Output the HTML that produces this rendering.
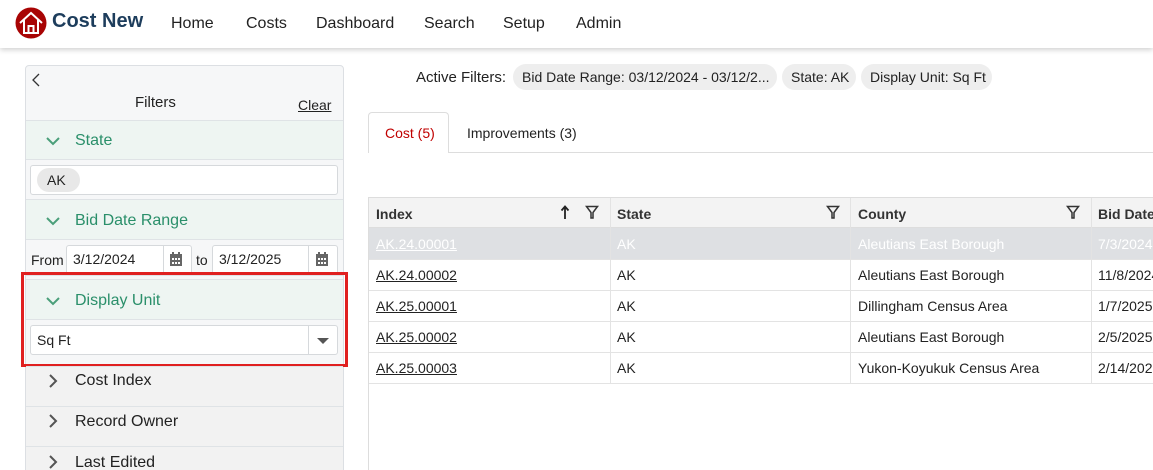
<!DOCTYPE html>
<html style="width:1153px;height:470px;overflow:hidden"><head><meta charset="utf-8"><style>
*{box-sizing:border-box;margin:0;padding:0}
body{width:1153px;height:470px;overflow:hidden;background:#fff;font-family:"Liberation Sans",sans-serif;color:#222;position:relative}
.a{position:absolute;white-space:nowrap}
.hdr{position:absolute;left:0;top:0;width:1153px;height:48px;background:#fff;box-shadow:0 2px 5px rgba(0,0,0,.18)}
.nav{font-size:16px;top:14px;color:#222}
.side{left:25px;top:65px;width:319px;height:410px;background:#f6f7f8;border:1px solid #dcdfe3;border-radius:4px}
.sec{left:26px;width:317px;border-top:1px solid #dfe3e6;border-bottom:1px solid #dfe3e6}
.g{background:#eef5f2;color:#2a8f6a;font-size:16px}
.c{background:#f2f2f2;color:#333;font-size:16px}
.inp{background:#fff;border:1px solid #d6d9dc;border-radius:3px}
.chip{background:#eeeeee;border-radius:13px;font-size:14px;height:26px;line-height:26px;padding:0 9px;top:64px}
</style></head><body>
<div class="hdr"></div>
<svg class="a" style="left:15px;top:7px" width="32" height="32" viewBox="0 0 32 32"><circle cx="16" cy="16" r="15.5" fill="#a80404"/><path d="M5 16 L16 6 L27 16 M9 13 V26 H23 V13 M13.5 26 V19 H18.5 V26" fill="none" stroke="#fff" stroke-width="2"/></svg>
<div class="a" style="left:52px;top:10px;font-size:20px;font-weight:bold;color:#1d3d5c">Cost New</div>
<div class="a nav" style="left:171px;top:15px">Home</div>
<div class="a nav" style="left:246px;top:15px">Costs</div>
<div class="a nav" style="left:316px;top:15px">Dashboard</div>
<div class="a nav" style="left:424px;top:15px">Search</div>
<div class="a nav" style="left:503px;top:15px">Setup</div>
<div class="a nav" style="left:576px;top:15px">Admin</div>

<div class="a side"></div>
<svg class="a" style="left:31px;top:73px" width="10" height="14"><path d="M8 1 L2 7 L8 13" fill="none" stroke="#333" stroke-width="1.3"/></svg>
<div class="a" style="left:135px;top:94px;font-size:15px">Filters</div>
<div class="a" style="left:298px;top:97px;font-size:14px;text-decoration:underline">Clear</div>

<div class="a sec g" style="top:120px;height:40px"></div>
<svg class="a" style="left:45px;top:136px" width="16" height="10"><path d="M2 2 L8 8 L14 2" fill="none" stroke="#4a9f7a" stroke-width="2"/></svg>
<div class="a" style="left:75px;top:132px;font-size:16px;color:#2a8f6a">State</div>
<div class="a inp" style="left:30px;top:165px;width:308px;height:30px"></div>
<div class="a" style="left:37px;top:168px;width:43px;height:24px;background:#e8e8e8;border-radius:12px;font-size:14px;line-height:24px;padding-left:10px">AK</div>

<div class="a sec g" style="top:199px;height:41px"></div>
<svg class="a" style="left:45px;top:216px" width="16" height="10"><path d="M2 2 L8 8 L14 2" fill="none" stroke="#4a9f7a" stroke-width="2"/></svg>
<div class="a" style="left:75px;top:212px;font-size:16px;color:#2a8f6a">Bid Date Range</div>
<div class="a" style="left:31px;top:252px;font-size:14px">From</div>
<div class="a inp" style="left:66px;top:245px;width:126px;height:30px"></div>
<div class="a" style="left:163px;top:245px;width:1px;height:30px;background:#d6d9dc"></div>
<div class="a" style="left:73px;top:251px;font-size:14px">3/12/2024</div>
<svg class="a" style="left:169px;top:252px" width="14" height="15"><rect x="1" y="2" width="12" height="12" fill="#666"/><rect x="3" y="0" width="2" height="3" fill="#666"/><rect x="9" y="0" width="2" height="3" fill="#666"/><g fill="#fff"><rect x="3" y="6" width="2" height="2"/><rect x="6" y="6" width="2" height="2"/><rect x="9" y="6" width="2" height="2"/><rect x="3" y="10" width="2" height="2"/><rect x="6" y="10" width="2" height="2"/><rect x="9" y="10" width="2" height="2"/></g></svg>
<div class="a" style="left:196px;top:252px;font-size:14px">to</div>
<div class="a inp" style="left:212px;top:245px;width:126px;height:30px"></div>
<div class="a" style="left:308px;top:245px;width:1px;height:30px;background:#d6d9dc"></div>
<div class="a" style="left:219px;top:251px;font-size:14px">3/12/2025</div>
<svg class="a" style="left:315px;top:252px" width="14" height="15"><rect x="1" y="2" width="12" height="12" fill="#666"/><rect x="3" y="0" width="2" height="3" fill="#666"/><rect x="9" y="0" width="2" height="3" fill="#666"/><g fill="#fff"><rect x="3" y="6" width="2" height="2"/><rect x="6" y="6" width="2" height="2"/><rect x="9" y="6" width="2" height="2"/><rect x="3" y="10" width="2" height="2"/><rect x="6" y="10" width="2" height="2"/><rect x="9" y="10" width="2" height="2"/></g></svg>

<div class="a sec" style="top:275px;height:91px;background:#f6f7f8"></div>
<div class="a sec g" style="top:279px;height:41px"></div>
<svg class="a" style="left:45px;top:296px" width="16" height="10"><path d="M2 2 L8 8 L14 2" fill="none" stroke="#4a9f7a" stroke-width="2"/></svg>
<div class="a" style="left:75px;top:292px;font-size:16px;color:#2a8f6a">Display Unit</div>
<div class="a inp" style="left:30px;top:325px;width:308px;height:30px"></div>
<div class="a" style="left:308px;top:325px;width:1px;height:30px;background:#d6d9dc"></div>
<div class="a" style="left:37px;top:332px;font-size:14px">Sq Ft</div>
<div class="a" style="left:317px;top:338px;width:0;height:0;border-left:6px solid transparent;border-right:6px solid transparent;border-top:6px solid #555"></div>
<div class="a" style="left:21px;top:272px;width:327px;height:95px;border:3px solid #e02020"></div>

<div class="a sec c" style="top:366px;height:41px"></div>
<div class="a sec c" style="top:406px;height:41px"></div>
<div class="a sec c" style="top:446px;height:30px"></div>
<svg class="a" style="left:48px;top:373px" width="10" height="16"><path d="M2 2 L8 8 L2 14" fill="none" stroke="#555" stroke-width="2"/></svg>
<svg class="a" style="left:48px;top:413px" width="10" height="16"><path d="M2 2 L8 8 L2 14" fill="none" stroke="#555" stroke-width="2"/></svg>
<svg class="a" style="left:48px;top:454px" width="10" height="16"><path d="M2 2 L8 8 L2 14" fill="none" stroke="#555" stroke-width="2"/></svg>
<div class="a" style="left:75px;top:372px;font-size:16px">Cost Index</div>
<div class="a" style="left:75px;top:413px;font-size:16px">Record Owner</div>
<div class="a" style="left:75px;top:454px;font-size:16px">Last Edited</div>

<div class="a" style="left:416px;top:69px;font-size:15px">Active Filters:</div>
<div class="a chip" style="left:513px;width:264px">Bid Date Range: 03/12/2024 - 03/12/2...</div>
<div class="a chip" style="left:782px;width:74px">State: AK</div>
<div class="a chip" style="left:861px;width:131px">Display Unit: Sq Ft</div>

<div class="a" style="left:368px;top:152px;width:785px;height:1px;background:#ddd"></div>
<div class="a" style="left:368px;top:112px;width:81px;height:41px;border:1px solid #ddd;border-bottom:none;border-radius:4px 4px 0 0;background:#fff"></div>
<div class="a" style="left:385px;top:125px;font-size:14px;color:#c00000">Cost (5)</div>
<div class="a" style="left:467px;top:125px;font-size:14px">Improvements (3)</div>

<div class="a" style="left:368px;top:197px;width:785px;height:280px;border:1px solid #ddd;border-right:none"></div>
<div class="a" style="left:369px;top:198px;width:784px;height:30px;background:#f3f3f3"></div>
<div class="a" style="left:369px;top:228px;width:784px;height:31px;background:#dee0e3"></div>
<div class="a" style="left:369px;top:227px;width:784px;height:1px;background:#ddd"></div>
<div class="a" style="left:610px;top:198px;width:1px;height:185px;background:#e3e3e3"></div>
<div class="a" style="left:850px;top:198px;width:1px;height:185px;background:#e3e3e3"></div>
<div class="a" style="left:1091px;top:198px;width:1px;height:185px;background:#e3e3e3"></div>
<div class="a" style="left:369px;top:259px;width:784px;height:1px;background:#e3e3e3"></div>
<div class="a" style="left:369px;top:290px;width:784px;height:1px;background:#e3e3e3"></div>
<div class="a" style="left:369px;top:321px;width:784px;height:1px;background:#e3e3e3"></div>
<div class="a" style="left:369px;top:352px;width:784px;height:1px;background:#e3e3e3"></div>
<div class="a" style="left:369px;top:383px;width:784px;height:1px;background:#e3e3e3"></div>
<div class="a" style="left:376px;top:206px;font-size:14px;font-weight:bold;color:#333">Index</div>
<svg class="a" style="left:560px;top:205px" width="10" height="15"><path d="M5 14 V2 M1.5 5.5 L5 1.5 L8.5 5.5" fill="none" stroke="#222" stroke-width="1.8"/></svg>
<svg class="a" style="left:585px;top:205px" width="14" height="15"><path d="M1.5 1.5 H12.5 L8 7.5 V13 H6 V7.5 Z" fill="none" stroke="#333" stroke-width="1.5"/></svg>
<div class="a" style="left:617px;top:206px;font-size:14px;font-weight:bold;color:#333">State</div>
<svg class="a" style="left:826px;top:205px" width="14" height="15"><path d="M1.5 1.5 H12.5 L8 7.5 V13 H6 V7.5 Z" fill="none" stroke="#333" stroke-width="1.5"/></svg>
<div class="a" style="left:858px;top:206px;font-size:14px;font-weight:bold;color:#333">County</div>
<svg class="a" style="left:1066px;top:205px" width="14" height="15"><path d="M1.5 1.5 H12.5 L8 7.5 V13 H6 V7.5 Z" fill="none" stroke="#333" stroke-width="1.5"/></svg>
<div class="a" style="left:1098px;top:206px;font-size:14px;font-weight:bold;color:#333">Bid Date</div>

<div class="a" style="left:376px;top:236px;font-size:14px;color:#fff;text-decoration:underline">AK.24.00001</div>
<div class="a" style="left:617px;top:236px;font-size:14px;color:#fff">AK</div>
<div class="a" style="left:858px;top:236px;font-size:14px;color:#fff">Aleutians East Borough</div>
<div class="a" style="left:1098px;top:236px;font-size:14px;color:#fff">7/3/2024</div>

<div class="a" style="left:376px;top:267px;font-size:14px;text-decoration:underline">AK.24.00002</div>
<div class="a" style="left:617px;top:267px;font-size:14px">AK</div>
<div class="a" style="left:858px;top:267px;font-size:14px">Aleutians East Borough</div>
<div class="a" style="left:1098px;top:267px;font-size:14px">11/8/2024</div>

<div class="a" style="left:376px;top:298px;font-size:14px;text-decoration:underline">AK.25.00001</div>
<div class="a" style="left:617px;top:298px;font-size:14px">AK</div>
<div class="a" style="left:858px;top:298px;font-size:14px">Dillingham Census Area</div>
<div class="a" style="left:1098px;top:298px;font-size:14px">1/7/2025</div>

<div class="a" style="left:376px;top:329px;font-size:14px;text-decoration:underline">AK.25.00002</div>
<div class="a" style="left:617px;top:329px;font-size:14px">AK</div>
<div class="a" style="left:858px;top:329px;font-size:14px">Aleutians East Borough</div>
<div class="a" style="left:1098px;top:329px;font-size:14px">2/5/2025</div>

<div class="a" style="left:376px;top:360px;font-size:14px;text-decoration:underline">AK.25.00003</div>
<div class="a" style="left:617px;top:360px;font-size:14px">AK</div>
<div class="a" style="left:858px;top:360px;font-size:14px">Yukon-Koyukuk Census Area</div>
<div class="a" style="left:1098px;top:360px;font-size:14px">2/14/2025</div>
</body></html>
